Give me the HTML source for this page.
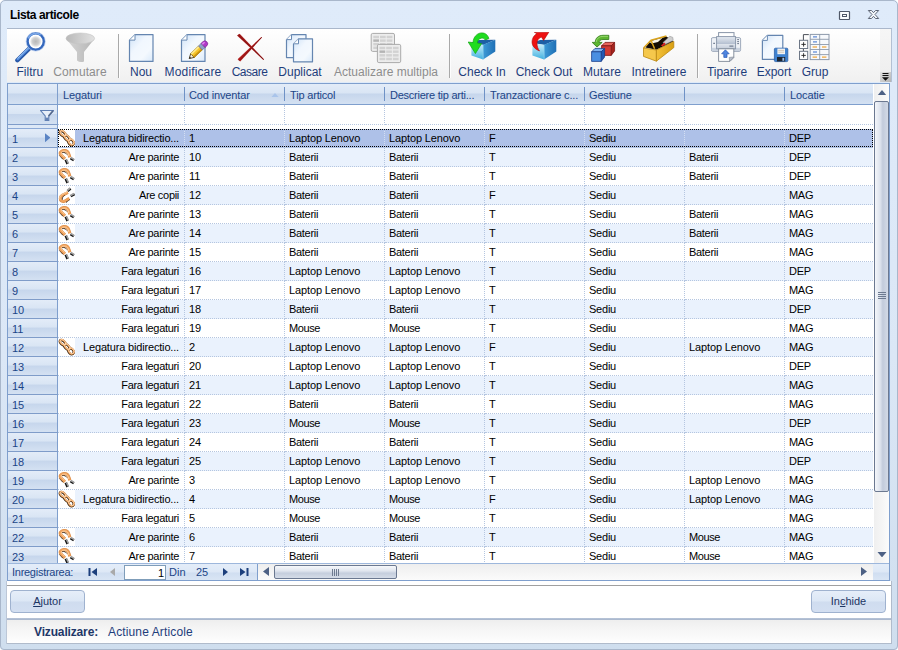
<!DOCTYPE html>
<html><head><meta charset="utf-8"><title>Lista articole</title>
<style>
*{box-sizing:border-box;margin:0;padding:0}
html,body{width:898px;height:650px;overflow:hidden;background:#fff}
body{font-family:"Liberation Sans",sans-serif;font-size:11px;color:#000;position:relative}
.abs{position:absolute}
#win{position:absolute;left:0;top:0;width:898px;height:650px;background:linear-gradient(#dfebfa 0,#dbe7f6 55%,#cfdeee 100%);border-radius:5px 5px 4px 4px;}
#win:before{content:"";position:absolute;left:0;top:0;right:0;bottom:0;border:1px solid #a9b7cb;border-radius:5px 5px 4px 4px}
#title{position:absolute;left:10px;top:8px;font-weight:bold;font-size:12px;letter-spacing:-0.38px;color:#000;white-space:nowrap}
#tb{position:absolute;left:7px;top:28px;width:885px;height:54px;background:linear-gradient(#ffffff,#f8f8f8 50%,#f0f0f0);border-top:1px solid #aab7cb;border-right:1px solid #b3c0d3}
.tbtn{position:absolute;top:0;height:54px;text-align:center;font-size:12px;color:#1e3d7b;white-space:nowrap}
.tbtn .lbl{position:absolute;left:50%;transform:translateX(-50%);top:36px;line-height:14px}
.tbtn.dis .lbl{color:#8d8d8d}
.tbtn svg{position:absolute;left:24px;top:3px}
.sep{position:absolute;top:5px;width:1px;height:44px;background:#a9a9a9;box-shadow:1px 0 0 #fdfdfd}
#grid{position:absolute;left:7px;top:83px;width:883px;height:498px;background:#fff;border:1px solid #7f9fcd}
.hdr{position:absolute;top:0;height:20px;background:linear-gradient(#e3ecf8 0,#d9e5f4 45%,#c6d6ec 50%,#d4e1f2 100%);color:#1c4587;font-size:11px;line-height:20px;white-space:nowrap;overflow:hidden}
.hsep{position:absolute;top:3px;width:1px;height:14px;background:#6f92c6}
.ind{position:absolute;left:0;width:50px;background:linear-gradient(#e3ecf8 0,#d9e5f4 45%,#c6d6ec 50%,#d4e1f2 100%);border-right:1px solid #7f9fcd;border-bottom:1px solid #7f9cc9;color:#1c4587;font-size:11px}
.row{position:absolute;left:50px;width:815px;height:19px}
.cell{position:absolute;top:0;height:19px;line-height:18px;white-space:nowrap;overflow:hidden;font-size:11px;border-right:1px dotted #b5c6e0;border-bottom:1px dotted #b5c6e0}
.ic{position:absolute;left:0;top:0}
</style></head><body>
<div id="win">
<div id="title">Lista articole</div>

<svg class="abs" style="left:836px;top:8px" width="50" height="14" viewBox="0 0 50 14">
<rect x="3.5" y="3.5" width="10" height="8" rx="0.5" fill="#fafcfe" stroke="#4f5868" stroke-width="1.2"/><rect x="6.5" y="6.5" width="4" height="2" fill="#fff" stroke="#4f5868"/>
<path d="M32.3 2.5h3.2l2 2.2 2-2.2h3.2l-3.7 4 3.7 4h-3.2l-2-2.2-2 2.2h-3.2l3.7-4z" fill="#f6f9fd" stroke="#5d6676" stroke-width="1" stroke-linejoin="round"/>
</svg>
<div id="tb">
<div class="tbtn" style="left:-16px;width:80px"><svg width="32" height="32" viewBox="0 0 32 32"><defs>
<linearGradient id="gpage" x1="0" y1="0" x2="1" y2="1"><stop offset="0" stop-color="#cde1f7"/><stop offset="0.4" stop-color="#f1f7fe"/><stop offset="0.7" stop-color="#f4f9fe"/><stop offset="1" stop-color="#d9e9fa"/></linearGradient>
<radialGradient id="glens" cx="0.5" cy="0.5" r="0.5"><stop offset="0" stop-color="#b8b8b8"/><stop offset="0.6" stop-color="#cdcdcd"/><stop offset="1" stop-color="#f4f4f4"/></radialGradient>
<linearGradient id="gfun" x1="0" y1="0" x2="1" y2="0"><stop offset="0" stop-color="#b9b9b9"/><stop offset="1" stop-color="#e2e2e2"/></linearGradient>
<linearGradient id="gfun2" x1="0" y1="0" x2="1" y2="0"><stop offset="0" stop-color="#d6d6d6"/><stop offset="1" stop-color="#b5b5b5"/></linearGradient>
<linearGradient id="gboxl" x1="0" y1="0" x2="0" y2="1"><stop offset="0" stop-color="#d4f2fb"/><stop offset="1" stop-color="#3fb0e0"/></linearGradient>
<linearGradient id="gboxr" x1="0" y1="0" x2="1" y2="0"><stop offset="0" stop-color="#3d9ad6"/><stop offset="1" stop-color="#1f6fb5"/></linearGradient>
<linearGradient id="gprn" x1="0" y1="0" x2="0" y2="1"><stop offset="0" stop-color="#e6ebf2"/><stop offset="0.6" stop-color="#b4bfd0"/><stop offset="0.62" stop-color="#dfe4ec"/><stop offset="1" stop-color="#c3ccda"/></linearGradient>
<linearGradient id="gyl" x1="0" y1="0" x2="1" y2="0"><stop offset="0" stop-color="#f3c23c"/><stop offset="1" stop-color="#d99f12"/></linearGradient>
</defs>
<path d="M15.6 15.3 L2.4 28.2" stroke="#2858a8" stroke-width="4.4" stroke-linecap="round"/>
<path d="M15.2 14.9 L2.6 27.2" stroke="#5e97e4" stroke-width="2" stroke-linecap="round"/>
<path d="M14.6 14.7 L3 26" stroke="#a5c8f4" stroke-width="0.8" stroke-linecap="round"/>
<circle cx="20.7" cy="9.5" r="8.2" fill="#fff" stroke="#3568bd" stroke-width="2.6"/>
<circle cx="20.7" cy="9.5" r="5.6" fill="url(#glens)"/>
<path d="M13.2 6.4 A8.2 8.2 0 0 1 25.6 3" fill="none" stroke="#79a6e6" stroke-width="1.6"/>
<circle cx="20.7" cy="9.5" r="9.6" fill="none" stroke="#aec8ee" stroke-width="0.6"/>
</svg><span class="lbl" style="letter-spacing:0px;margin-left:-1.2px">Filtru</span></div>
<div class="tbtn dis" style="left:33px;width:80px"><svg width="32" height="32" viewBox="0 0 32 32">
<path d="M2.2 7 L13 20 L13 28.5 Q16 31 20 29.5 L20 20 L30.3 7 Z" fill="url(#gfun2)"/>
<ellipse cx="16.3" cy="6.4" rx="14.3" ry="5.4" fill="url(#gfun)" stroke="#c4c4c4" stroke-width="0.6"/>
</svg><span class="lbl" style="letter-spacing:0.1px;margin-left:0px">Comutare</span></div>
<div class="tbtn" style="left:94px;width:80px"><svg width="32" height="32" viewBox="0 0 32 32"><path d="M10.0 2.6H28.0V29.400000000000002H4.5V8.1Z" fill="url(#gpage)" stroke="#6485b0" stroke-width="1.2" stroke-linejoin="round"/><path d="M4.5 8.1H10.0V2.6Z" fill="#fff"/><path d="M4.5 8.1H10.0V2.6" fill="none" stroke="#6a8ab3" stroke-width="1" stroke-linejoin="round"/><path d="M4.5 8.1L10.0 2.6" stroke="#a9bdd6" stroke-width="0.7"/></svg><span class="lbl" style="letter-spacing:0px;margin-left:0px">Nou</span></div>
<div class="tbtn" style="left:146px;width:80px"><svg width="32" height="32" viewBox="0 0 32 32"><path d="M10.0 2.6H28.0V29.400000000000002H4.5V8.1Z" fill="url(#gpage)" stroke="#6485b0" stroke-width="1.2" stroke-linejoin="round"/><path d="M4.5 8.1H10.0V2.6Z" fill="#fff"/><path d="M4.5 8.1H10.0V2.6" fill="none" stroke="#6a8ab3" stroke-width="1" stroke-linejoin="round"/><path d="M4.5 8.1L10.0 2.6" stroke="#a9bdd6" stroke-width="0.7"/>
<g transform="translate(12.2 26.6) rotate(-43.5)">
<path d="M0 0 L4.5 -2.6 L4.5 2.6 Z" fill="#f8efd8" stroke="#3a2c10" stroke-width="0.8"/>
<path d="M0 0 L1.8 -1 L1.8 1 Z" fill="#222"/>
<rect x="4.5" y="-2.7" width="11" height="5.4" fill="#f6c52b" stroke="#7a5a0a" stroke-width="0.6"/>
<rect x="4.5" y="-2.7" width="11" height="1.8" fill="#fde88a"/>
<rect x="4.5" y="1.2" width="11" height="1.5" fill="#c99212"/>
<rect x="15.5" y="-2.8" width="3.6" height="5.6" fill="#8fa0c8" stroke="#4d5b80" stroke-width="0.5"/>
<path d="M19.1 -2.9 H21.5 A2.9 2.9 0 0 1 21.5 2.9 H19.1 Z" fill="#b038c8" stroke="#6a1880" stroke-width="0.5"/>
<path d="M19.4 -2 H21.6 A2 1.4 0 0 1 22.6 -0.6 H19.4Z" fill="#e487f2"/>
</g></svg><span class="lbl" style="letter-spacing:0.14px;margin-left:0px">Modificare</span></div>
<div class="tbtn" style="left:203px;width:80px"><svg width="32" height="32" viewBox="0 0 32 32">
<path d="M3 3.4 L5.6 1.8 L30 27.2 L29.3 27.9 Z" fill="#a81a1a"/>
<path d="M4.2 2.8 L29.6 27.5" stroke="#6b1010" stroke-width="0.7"/>
<path d="M3.6 27.2 L6.2 29.4 L28 5.6 L27.3 4.9 Z" fill="#b21c1c"/>
<path d="M5.2 28.6 L27.7 5.3" stroke="#701010" stroke-width="0.7"/>
</svg><span class="lbl" style="letter-spacing:-0.5px;margin-left:-0.5px">Casare</span></div>
<div class="tbtn" style="left:253px;width:80px"><svg width="32" height="32" viewBox="0 0 32 32"><path d="M7.5 2.6H22.0V25.6H2.5V7.6Z" fill="url(#gpage)" stroke="#6485b0" stroke-width="1.2" stroke-linejoin="round"/><path d="M2.5 7.6H7.5V2.6Z" fill="#fff"/><path d="M2.5 7.6H7.5V2.6" fill="none" stroke="#6a8ab3" stroke-width="1" stroke-linejoin="round"/><path d="M2.5 7.6L7.5 2.6" stroke="#a9bdd6" stroke-width="0.7"/><path d="M14.5 6.8H28.5V29.8H9.5V11.8Z" fill="url(#gpage)" stroke="#6485b0" stroke-width="1.2" stroke-linejoin="round"/><path d="M9.5 11.8H14.5V6.8Z" fill="#fff"/><path d="M9.5 11.8H14.5V6.8" fill="none" stroke="#6a8ab3" stroke-width="1" stroke-linejoin="round"/><path d="M9.5 11.8L14.5 6.8" stroke="#a9bdd6" stroke-width="0.7"/></svg><span class="lbl" style="letter-spacing:0px;margin-left:0px">Duplicat</span></div>
<div class="tbtn dis" style="left:339px;width:80px"><svg width="32" height="32" viewBox="0 0 32 32"><rect x="1.2" y="1.4" width="23.3" height="18" rx="1.5" fill="#ededed" stroke="#ababab" stroke-width="1"/><rect x="3.30" y="3.80" width="5.70" height="2.40" fill="#d2d2d2"/><rect x="10.00" y="3.80" width="5.70" height="2.40" fill="#d2d2d2"/><rect x="16.70" y="3.80" width="5.70" height="2.40" fill="#d2d2d2"/><rect x="3.30" y="7.40" width="5.70" height="2.40" fill="#b4b4b4"/><rect x="10.00" y="7.40" width="5.70" height="2.40" fill="#d2d2d2"/><rect x="16.70" y="7.40" width="5.70" height="2.40" fill="#d2d2d2"/><rect x="3.30" y="11.00" width="5.70" height="2.40" fill="#d2d2d2"/><rect x="10.00" y="11.00" width="5.70" height="2.40" fill="#d2d2d2"/><rect x="16.70" y="11.00" width="5.70" height="2.40" fill="#d2d2d2"/><rect x="3.30" y="14.60" width="5.70" height="2.40" fill="#d2d2d2"/><rect x="10.00" y="14.60" width="5.70" height="2.40" fill="#d2d2d2"/><rect x="16.70" y="14.60" width="5.70" height="2.40" fill="#d2d2d2"/><rect x="7.4" y="12.4" width="23.3" height="18.2" rx="1.5" fill="#ededed" stroke="#ababab" stroke-width="1"/><rect x="9.50" y="14.80" width="5.70" height="2.45" fill="#d2d2d2"/><rect x="16.20" y="14.80" width="5.70" height="2.45" fill="#d2d2d2"/><rect x="22.90" y="14.80" width="5.70" height="2.45" fill="#d2d2d2"/><rect x="9.50" y="18.45" width="5.70" height="2.45" fill="#b4b4b4"/><rect x="16.20" y="18.45" width="5.70" height="2.45" fill="#d2d2d2"/><rect x="22.90" y="18.45" width="5.70" height="2.45" fill="#d2d2d2"/><rect x="9.50" y="22.10" width="5.70" height="2.45" fill="#d2d2d2"/><rect x="16.20" y="22.10" width="5.70" height="2.45" fill="#d2d2d2"/><rect x="22.90" y="22.10" width="5.70" height="2.45" fill="#d2d2d2"/><rect x="9.50" y="25.75" width="5.70" height="2.45" fill="#d2d2d2"/><rect x="16.20" y="25.75" width="5.70" height="2.45" fill="#d2d2d2"/><rect x="22.90" y="25.75" width="5.70" height="2.45" fill="#d2d2d2"/></svg><span class="lbl" style="letter-spacing:0px;margin-left:0px">Actualizare multipla</span></div>
<div class="tbtn" style="left:435px;width:80px"><svg width="32" height="32" viewBox="0 0 32 32">
<path d="M5.4 11 L13 8 L29.2 7.7 L17.1 12.9 Z" fill="#1d5fa5"/>
<path d="M5.4 11 L17.1 12.8 L17.1 27.5 L5.4 23.4 Z" fill="url(#gboxl)"/>
<path d="M17.1 12.8 L29.3 7.7 L29.3 19.4 L17.1 27.5 Z" fill="url(#gboxr)"/>
<path d="M17.1 12.8 L17.1 27.5" stroke="#8fd4f0" stroke-width="0.6"/>

<path d="M22.9 6.6 C21.5 1.2 16 -0.6 11.5 2.2 C8.4 4.2 7.2 7.4 7 10.6 L2.2 10 L9.4 21.6 L15.6 11.6 L11.4 11.1 C11.6 8.6 12.6 6.8 15 6.2 C17 5.8 18.6 6.6 19.2 8 Z" fill="#1fdc1f" stroke="#10a510" stroke-width="0.7" stroke-linejoin="round"/>
</svg><span class="lbl" style="letter-spacing:0px;margin-left:0px">Check In</span></div>
<div class="tbtn" style="left:497px;width:80px"><svg width="32" height="32" viewBox="0 0 32 32">
<path d="M4.4 11 L12 8 L28.2 7.7 L16.1 12.9 Z" fill="#1d5fa5"/>
<path d="M4.4 11 L16.1 12.8 L16.1 27.5 L4.4 23.4 Z" fill="url(#gboxl)"/>
<path d="M16.1 12.8 L28.3 7.7 L28.3 19.4 L16.1 27.5 Z" fill="url(#gboxr)"/>
<path d="M16.1 12.8 L16.1 27.5" stroke="#8fd4f0" stroke-width="0.6"/>

<path d="M11.6 19 C5.6 16.6 3 12.2 4.4 7.4 C5.2 4.6 7 2.6 9 1.6 L6.4 0.4 L20.8 0.2 L15.6 8.4 L13.4 5 C10.6 6.2 9 8.4 9 11.2 C9 14.4 10 17 11.6 19 Z" fill="#ee1212" stroke="#b00a0a" stroke-width="0.6" stroke-linejoin="round"/>
</svg><span class="lbl" style="letter-spacing:0px;margin-left:0px">Check Out</span></div>
<div class="tbtn" style="left:555px;width:80px"><svg width="32" height="32" viewBox="0 0 32 32"><path d="M15.6 13.8 L19.0 10.4 L28.599999999999998 10.4 L25.2 13.8 Z" fill="#e8665c" stroke="#7c1411" stroke-width="0.8" stroke-linejoin="round"/><path d="M25.2 13.8 L28.599999999999998 10.4 L28.599999999999998 19.0 L25.2 23.4 Z" fill="#a5231d" stroke="#7c1411" stroke-width="0.8" stroke-linejoin="round"/><rect x="15.6" y="13.8" width="9.6" height="9.6" fill="#d23b33" stroke="#7c1411" stroke-width="0.8" stroke-linejoin="round"/><path d="M5.6 19.8 L9.0 16.400000000000002 L18.599999999999998 16.400000000000002 L15.2 19.8 Z" fill="#7db2f0" stroke="#1a3f8a" stroke-width="0.8" stroke-linejoin="round"/><path d="M15.2 19.8 L18.599999999999998 16.400000000000002 L18.599999999999998 25.0 L15.2 29.4 Z" fill="#2359b3" stroke="#1a3f8a" stroke-width="0.8" stroke-linejoin="round"/><rect x="5.6" y="19.8" width="9.6" height="9.6" fill="#4a8fe2" stroke="#1a3f8a" stroke-width="0.8" stroke-linejoin="round"/><path d="M22.8 3.3 L22.8 7.5 L17 7.5 C14.6 7.6 13.2 8.6 13 10.4 L16.2 10.4 L11 15 L6.2 10.4 L9.2 10.4 C9.4 6 12.4 3.4 17 3.3 Z" fill="#5db531" stroke="#2e7a17" stroke-width="0.8" stroke-linejoin="round"/>
 <path d="M22 4.3 L17 4.3 C13 4.5 10.6 6.6 10.2 10" stroke="#a4e07c" stroke-width="0.8" fill="none"/></svg><span class="lbl" style="letter-spacing:0.15px;margin-left:0px">Mutare</span></div>
<div class="tbtn" style="left:612px;width:80px"><svg width="32" height="32" viewBox="0 0 32 32">
<path d="M2.4 15.6 L8 8.6 L23.4 4.4 L30.4 9.6 L13.4 17.8 Z" fill="#140c04"/>
<path d="M20 10.5 L26.8 4.2 L29.8 5.4 L30.2 8.4 L22 12.6 Z" fill="#cfcfcf" stroke="#8a8a8a" stroke-width="0.5"/>
<path d="M18 13.4 L21.6 10.6 L22.6 12 L19.4 14.4Z" fill="#e02020"/>
<path d="M6 9.6 L14 7.2 L19.6 5.8 L15 10 L8.4 11.4 Z" fill="#f8f4ea"/>
<path d="M0.6 16 L8 8.2 L23.4 4 M8 8.2 L11.6 16.8" stroke="#d9a21c" stroke-width="1.5" fill="none" stroke-linejoin="round"/>
<path d="M0.5 16 L13.4 18 L13.4 29.2 L0.5 24.4 Z" fill="#f5c84c" stroke="#b98712" stroke-width="0.8" stroke-linejoin="round"/>
<path d="M13.4 18 L30.8 9.4 L30.8 15.6 L13.4 29.2 Z" fill="url(#gyl)" stroke="#b98712" stroke-width="0.8" stroke-linejoin="round"/>
</svg><span class="lbl" style="letter-spacing:0.1px;margin-left:0px">Intretinere</span></div>
<div class="tbtn" style="left:680px;width:80px"><svg width="32" height="32" viewBox="0 0 32 32">
<rect x="7.6" y="0.6" width="15.4" height="5" fill="#fff" stroke="#8996a8" stroke-width="1"/>
<rect x="0.4" y="5.6" width="29.2" height="13.8" rx="1.5" fill="#eef1f6" stroke="#95a1b4" stroke-width="0.9"/>
<rect x="0.8" y="15.8" width="28.4" height="3.2" fill="#c9d2df"/>
<rect x="5.6" y="4.6" width="19" height="12.2" fill="url(#gprn)" stroke="#8794a8" stroke-width="0.9"/>
<rect x="18.4" y="13.6" width="4" height="1" fill="#5e6b80"/>
<rect x="2.2" y="10.8" width="1.8" height="1" fill="#5e6b80"/>
<rect x="26.2" y="7.2" width="1.8" height="0.9" fill="#5e6b80"/><rect x="26.2" y="9.2" width="1.8" height="0.9" fill="#5e6b80"/><rect x="26.2" y="11.2" width="1.8" height="0.9" fill="#5e6b80"/>
<path d="M7.6 16.8 H22.8 V25.6 L19 29.4 H7.6 Z" fill="#fff" stroke="#7d8796" stroke-width="0.9" stroke-linejoin="round"/>
<path d="M22.8 25 L18.6 29.4 L18.2 25.4 Z" fill="#b9c0cb" stroke="#7d8796" stroke-width="0.6"/>
<path d="M14.4 17.8 L18.2 21.8 L16 21.8 L16 25.4 L12.8 25.4 L12.8 21.8 L10.6 21.8 Z" fill="#4f86e0" stroke="#2a57b4" stroke-width="0.7" stroke-linejoin="round"/>
</svg><span class="lbl" style="letter-spacing:0px;margin-left:0px">Tiparire</span></div>
<div class="tbtn" style="left:727px;width:80px"><svg width="32" height="32" viewBox="0 0 32 32"><path d="M9.4 3.4H24.799999999999997V27.4H4.4V8.4Z" fill="url(#gpage)" stroke="#6485b0" stroke-width="1.2" stroke-linejoin="round"/><path d="M4.4 8.4H9.4V3.4Z" fill="#fff"/><path d="M4.4 8.4H9.4V3.4" fill="none" stroke="#6a8ab3" stroke-width="1" stroke-linejoin="round"/><path d="M4.4 8.4L9.4 3.4" stroke="#a9bdd6" stroke-width="0.7"/>
<rect x="16.4" y="16.2" width="13.4" height="13.4" rx="1" fill="#3f82cf" stroke="#2b5ea6" stroke-width="0.8"/>
<rect x="19.4" y="16.6" width="7.6" height="5.6" fill="#f4f4f4"/>
<path d="M20.2 18.4h6M20.2 20.2h6" stroke="#c9b9a0" stroke-width="0.7"/>
<rect x="19" y="25" width="8.2" height="4.4" fill="#1e2630"/>
<rect x="24.4" y="25.8" width="1.8" height="3" fill="#9fc0e8"/>
</svg><span class="lbl" style="letter-spacing:0px;margin-left:0px">Export</span></div>
<div class="tbtn" style="left:768px;width:80px"><svg width="32" height="32" viewBox="0 0 32 32"><rect x="11.2" y="2.4" width="18.8" height="25.2" fill="#f7f9fc" stroke="#8c98aa" stroke-width="1"/><path d="M20.7 2.4V27.6 M11.2 7.3H30 M11.2 12.5H30 M11.2 17.5H30 M11.2 22.6H30" stroke="#8c98aa" stroke-width="0.9"/><path d="M14 4.9H18" stroke="#4a7ad0" stroke-width="1.1"/><path d="M14 9.9H18" stroke="#4a7ad0" stroke-width="1.1"/><path d="M13.6 15H18" stroke="#f0a232" stroke-width="1.2"/><path d="M23 15H27.4" stroke="#f0a232" stroke-width="1.2"/><path d="M14 20H18" stroke="#4a7ad0" stroke-width="1.1"/><path d="M13.6 25.1H18" stroke="#f0a232" stroke-width="1.2"/><path d="M23 25.1H27.4" stroke="#f0a232" stroke-width="1.2"/><path d="M9.8 2.6H4.4V8.2 M4.4 16.5V19.2" stroke="#4a4f58" stroke-width="1" fill="none"/><rect x="0.5" y="8.3" width="8.2" height="8.2" fill="#fdfdfd" stroke="#6d7786" stroke-width="1"/><path d="M2.4 12.4H6.8M4.6 10.200000000000001V14.600000000000001" stroke="#222" stroke-width="0.9"/><rect x="0.5" y="19.3" width="8.2" height="8.2" fill="#fdfdfd" stroke="#6d7786" stroke-width="1"/><path d="M2.4 23.4H6.8M4.6 21.2V25.6" stroke="#222" stroke-width="0.9"/></svg><span class="lbl" style="letter-spacing:0px;margin-left:0px">Grup</span></div>
<div class="sep" style="left:111px"></div>
<div class="sep" style="left:442px"></div>
<div class="sep" style="left:690px"></div>
<div class="abs" style="left:873px;top:0;width:11px;height:53px;background:linear-gradient(#f6f6f6,#ededed)"></div>
<svg class="abs" style="left:873px;top:43px" width="11" height="10" viewBox="0 0 11 10"><defs><linearGradient id="gchev" x1="0" y1="0" x2="1" y2="1"><stop offset="0" stop-color="#e4e4e4"/><stop offset="1" stop-color="#b4b4b4"/></linearGradient></defs><rect x="0" y="0" width="11" height="10" fill="url(#gchev)"/><path d="M2.5 1.5h6M2.5 3.5h6" stroke="#111" stroke-width="1"/><path d="M2 5.2h7l-3.5 3.6z" fill="#111"/></svg>
</div>
<div id="grid">
<div class="hdr" style="left:0;width:865px;border-bottom:1px solid #7f9fcd;height:21px"></div>
<div class="abs" style="left:49px;top:0;width:1px;height:21px;background:#7f9fcd"></div>
<div class="abs" style="left:55px;top:0;height:20px;line-height:22px;color:#1c4587;font-size:11px;white-space:nowrap;letter-spacing:-0.1px">Legaturi</div>
<div class="abs" style="left:181px;top:0;height:20px;line-height:22px;color:#1c4587;font-size:11px;white-space:nowrap;letter-spacing:-0.14px">Cod inventar</div>
<div class="hsep" style="left:176px"></div>
<div class="abs" style="left:282px;top:0;height:20px;line-height:22px;color:#1c4587;font-size:11px;white-space:nowrap;letter-spacing:-0.18px">Tip articol</div>
<div class="hsep" style="left:276px"></div>
<div class="abs" style="left:382px;top:0;height:20px;line-height:22px;color:#1c4587;font-size:11px;white-space:nowrap;letter-spacing:-0.24px">Descriere tip arti...</div>
<div class="hsep" style="left:376px"></div>
<div class="abs" style="left:482px;top:0;height:20px;line-height:22px;color:#1c4587;font-size:11px;white-space:nowrap;letter-spacing:-0.13px">Tranzactionare c...</div>
<div class="hsep" style="left:476px"></div>
<div class="abs" style="left:581px;top:0;height:20px;line-height:22px;color:#1c4587;font-size:11px;white-space:nowrap;letter-spacing:-0.18px">Gestiune</div>
<div class="hsep" style="left:576px"></div>
<div class="abs" style="left:682px;top:0;height:20px;line-height:22px;color:#1c4587;font-size:11px;white-space:nowrap"></div>
<div class="hsep" style="left:676px"></div>
<div class="abs" style="left:782px;top:0;height:20px;line-height:22px;color:#1c4587;font-size:11px;white-space:nowrap;letter-spacing:-0.11px">Locatie</div>
<div class="hsep" style="left:776px"></div>
<svg class="abs" style="left:262.5px;top:9px" width="8" height="4.4" viewBox="0 0 9 5"><path d="M0 5L4.5 0L9 5z" fill="#a9c4ea"/></svg>
<div class="ind" style="top:21px;height:20px"></div>
<svg class="abs" style="left:32px;top:25px" width="14" height="12" viewBox="0 0 14 12"><path d="M0.6 1.5h12.8L8.8 7V11.4h-3.6V7z" fill="#e8eff9" stroke="#5f7fb4" stroke-width="1.1" stroke-linejoin="miter"/><path d="M13 1.8L8.6 7" stroke="#56698c" stroke-width="1.6"/><path d="M5.4 8.6h3.2v2.8h-3.2z" fill="#6482b4"/></svg>
<div class="cell" style="left:50px;top:21px;width:127px;height:20px;background:#fff"></div>
<div class="cell" style="left:177px;top:21px;width:100px;height:20px;background:#fff"></div>
<div class="cell" style="left:277px;top:21px;width:100px;height:20px;background:#fff"></div>
<div class="cell" style="left:377px;top:21px;width:100px;height:20px;background:#fff"></div>
<div class="cell" style="left:477px;top:21px;width:100px;height:20px;background:#fff"></div>
<div class="cell" style="left:577px;top:21px;width:100px;height:20px;background:#fff"></div>
<div class="cell" style="left:677px;top:21px;width:100px;height:20px;background:#fff"></div>
<div class="cell" style="left:777px;top:21px;width:88px;height:20px;background:#fff;border-right:none"></div>
<div class="abs" style="left:0;top:41px;width:50px;height:4px;background:#dde8f6;border-right:1px solid #7f9fcd;border-bottom:1px solid #8ca9d6"></div>
<div class="ind" style="top:45px;height:19px;line-height:19px"><span class="abs" style="left:4px;top:0.5px">1</span><svg class="abs" style="left:37px;top:3.5px" width="5.4" height="9.4" viewBox="0 0 6 10"><path d="M0 0L6 5L0 10z" fill="#5a84c4"/></svg></div>
<div class="row" style="top:45px">
<div class="cell" style="left:0px;width:127px;background:#aec1e8;border-right-color:#d3def2"><svg class="ic" width="17" height="18" viewBox="0 0 17 18"><rect width="17" height="18" fill="#fff"/>
<g fill="none" stroke="#2e1a06" stroke-width="2.3"><ellipse cx="4.6" cy="4.7" rx="3.3" ry="1.9" transform="rotate(40 4.6 4.7)"/><ellipse cx="8.9" cy="9" rx="3.4" ry="1.8" transform="rotate(47 8.9 9)"/><ellipse cx="13" cy="13.3" rx="3.1" ry="2.3" transform="rotate(52 13 13.3)"/></g>
<g fill="none" stroke="#f3a55e" stroke-width="1.7"><ellipse cx="4.9" cy="4.4" rx="3.3" ry="1.9" transform="rotate(40 4.9 4.4)"/><ellipse cx="9.2" cy="8.7" rx="3.4" ry="1.8" transform="rotate(47 9.2 8.7)"/><ellipse cx="13.3" cy="13" rx="3.1" ry="2.3" transform="rotate(52 13.3 13)"/></g>
<g fill="none" stroke="#fcd9b4" stroke-width="0.7"><ellipse cx="5" cy="4.2" rx="3.3" ry="1.9" transform="rotate(40 5 4.2)"/><ellipse cx="9.3" cy="8.5" rx="3.4" ry="1.8" transform="rotate(47 9.3 8.5)"/><ellipse cx="13.4" cy="12.8" rx="3.1" ry="2.3" transform="rotate(52 13.4 12.8)"/></g></svg><span class="abs" style="right:5px;top:0;letter-spacing:-0.17px">Legatura bidirectio...</span></div>
<div class="cell" style="left:127px;width:100px;background:#aec1e8;border-right-color:#d3def2"><span class="abs" style="left:4px;top:0">1</span></div>
<div class="cell" style="left:227px;width:100px;background:#aec1e8;border-right-color:#d3def2"><span class="abs" style="left:4px;top:0;letter-spacing:-0.12px">Laptop Lenovo</span></div>
<div class="cell" style="left:327px;width:100px;background:#aec1e8;border-right-color:#d3def2"><span class="abs" style="left:4px;top:0;letter-spacing:-0.12px">Laptop Lenovo</span></div>
<div class="cell" style="left:427px;width:100px;background:#aec1e8;border-right-color:#d3def2"><span class="abs" style="left:4px;top:0">F</span></div>
<div class="cell" style="left:527px;width:100px;background:#aec1e8;border-right-color:#d3def2"><span class="abs" style="left:4px;top:0;letter-spacing:-0.23px">Sediu</span></div>
<div class="cell" style="left:627px;width:100px;background:#aec1e8;border-right-color:#d3def2"><span class="abs" style="left:4px;top:0"></span></div>
<div class="cell" style="left:727px;width:88px;background:#aec1e8;border-right:none"><span class="abs" style="left:4px;top:0;letter-spacing:-0.24px">DEP</span></div>
<div class="abs" style="left:0;top:0;width:815px;height:18px;border:1px dotted #000"></div>
</div>
<div class="ind" style="top:64px;height:19px;line-height:19px"><span class="abs" style="left:4px;top:0.5px">2</span></div>
<div class="row" style="top:64px">
<div class="cell" style="left:0px;width:127px;background:#eaf2fd"><svg class="ic" width="17" height="18" viewBox="0 0 17 18"><rect width="17" height="18" fill="#fff"/>
<path d="M7.7 11.8 L9.6 15.9" stroke="#161616" stroke-width="2.6" fill="none"/><path d="M8.5 11.5 L10.4 15.5" stroke="#a2a2a2" stroke-width="1.6" fill="none"/>
<path d="M12.5 10.2 L15.8 12.3" stroke="#161616" stroke-width="2.4" fill="none"/><path d="M12.9 9.5 L16.3 11.6" stroke="#a2a2a2" stroke-width="1.6" fill="none"/>
<path d="M6.8 10.8 L2.9 6.9 C1.3 4.9 2.9 2.8 5.9 2.6 C8.5 2.5 10 3.8 10.6 5.6 L11.9 9.2" stroke="#d98a45" stroke-width="3.1" fill="none"/>
<path d="M6.9 10.6 L3.1 6.8 C1.6 4.9 3.1 3 5.9 2.8 C8.4 2.7 9.9 3.9 10.5 5.6 L11.8 9" stroke="#f0a25c" stroke-width="2.4" fill="none"/>
<path d="M6.6 9.4 L3.6 6.3 C2.6 4.9 3.5 3.3 5.9 3.1 C8.1 3 9.5 4.1 10.1 5.6 L10.9 8" stroke="#fbcfa2" stroke-width="1" fill="none"/>
<path d="M1.5 7.6 L5.2 11.6" stroke="#1a0d02" stroke-width="0.9" stroke-dasharray="1.2 0.5" fill="none"/>
<path d="M4.3 4.7 C6 4 8 4.9 8.9 6.8" stroke="#1a0d02" stroke-width="0.9" stroke-dasharray="1.4 0.4" fill="none"/></svg><span class="abs" style="right:5px;top:0;letter-spacing:-0.31px">Are parinte</span></div>
<div class="cell" style="left:127px;width:100px;background:#eaf2fd"><span class="abs" style="left:4px;top:0">10</span></div>
<div class="cell" style="left:227px;width:100px;background:#eaf2fd"><span class="abs" style="left:4px;top:0;letter-spacing:-0.31px">Baterii</span></div>
<div class="cell" style="left:327px;width:100px;background:#eaf2fd"><span class="abs" style="left:4px;top:0;letter-spacing:-0.31px">Baterii</span></div>
<div class="cell" style="left:427px;width:100px;background:#eaf2fd"><span class="abs" style="left:4px;top:0">T</span></div>
<div class="cell" style="left:527px;width:100px;background:#eaf2fd"><span class="abs" style="left:4px;top:0;letter-spacing:-0.23px">Sediu</span></div>
<div class="cell" style="left:627px;width:100px;background:#eaf2fd"><span class="abs" style="left:4px;top:0;letter-spacing:-0.31px">Baterii</span></div>
<div class="cell" style="left:727px;width:88px;background:#eaf2fd;border-right:none"><span class="abs" style="left:4px;top:0;letter-spacing:-0.24px">DEP</span></div>
</div>
<div class="ind" style="top:83px;height:19px;line-height:19px"><span class="abs" style="left:4px;top:0.5px">3</span></div>
<div class="row" style="top:83px">
<div class="cell" style="left:0px;width:127px;background:#fff"><svg class="ic" width="17" height="18" viewBox="0 0 17 18"><rect width="17" height="18" fill="#fff"/>
<path d="M7.7 11.8 L9.6 15.9" stroke="#161616" stroke-width="2.6" fill="none"/><path d="M8.5 11.5 L10.4 15.5" stroke="#a2a2a2" stroke-width="1.6" fill="none"/>
<path d="M12.5 10.2 L15.8 12.3" stroke="#161616" stroke-width="2.4" fill="none"/><path d="M12.9 9.5 L16.3 11.6" stroke="#a2a2a2" stroke-width="1.6" fill="none"/>
<path d="M6.8 10.8 L2.9 6.9 C1.3 4.9 2.9 2.8 5.9 2.6 C8.5 2.5 10 3.8 10.6 5.6 L11.9 9.2" stroke="#d98a45" stroke-width="3.1" fill="none"/>
<path d="M6.9 10.6 L3.1 6.8 C1.6 4.9 3.1 3 5.9 2.8 C8.4 2.7 9.9 3.9 10.5 5.6 L11.8 9" stroke="#f0a25c" stroke-width="2.4" fill="none"/>
<path d="M6.6 9.4 L3.6 6.3 C2.6 4.9 3.5 3.3 5.9 3.1 C8.1 3 9.5 4.1 10.1 5.6 L10.9 8" stroke="#fbcfa2" stroke-width="1" fill="none"/>
<path d="M1.5 7.6 L5.2 11.6" stroke="#1a0d02" stroke-width="0.9" stroke-dasharray="1.2 0.5" fill="none"/>
<path d="M4.3 4.7 C6 4 8 4.9 8.9 6.8" stroke="#1a0d02" stroke-width="0.9" stroke-dasharray="1.4 0.4" fill="none"/></svg><span class="abs" style="right:5px;top:0;letter-spacing:-0.31px">Are parinte</span></div>
<div class="cell" style="left:127px;width:100px;background:#fff"><span class="abs" style="left:4px;top:0">11</span></div>
<div class="cell" style="left:227px;width:100px;background:#fff"><span class="abs" style="left:4px;top:0;letter-spacing:-0.31px">Baterii</span></div>
<div class="cell" style="left:327px;width:100px;background:#fff"><span class="abs" style="left:4px;top:0;letter-spacing:-0.31px">Baterii</span></div>
<div class="cell" style="left:427px;width:100px;background:#fff"><span class="abs" style="left:4px;top:0">T</span></div>
<div class="cell" style="left:527px;width:100px;background:#fff"><span class="abs" style="left:4px;top:0;letter-spacing:-0.23px">Sediu</span></div>
<div class="cell" style="left:627px;width:100px;background:#fff"><span class="abs" style="left:4px;top:0;letter-spacing:-0.31px">Baterii</span></div>
<div class="cell" style="left:727px;width:88px;background:#fff;border-right:none"><span class="abs" style="left:4px;top:0;letter-spacing:-0.24px">DEP</span></div>
</div>
<div class="ind" style="top:102px;height:19px;line-height:19px"><span class="abs" style="left:4px;top:0.5px">4</span></div>
<div class="row" style="top:102px">
<div class="cell" style="left:0px;width:127px;background:#eaf2fd"><svg class="ic" width="17" height="18" viewBox="0 0 17 18"><rect width="17" height="18" fill="#fff"/>
<path d="M9.6 5.2 L12.6 2.6" stroke="#161616" stroke-width="2.4" fill="none"/><path d="M9.1 4.6 L12.1 2" stroke="#a2a2a2" stroke-width="1.7" fill="none"/>
<path d="M12.8 10.2 L16.5 8.1" stroke="#161616" stroke-width="2.4" fill="none"/><path d="M12.5 9.5 L16.2 7.4" stroke="#a2a2a2" stroke-width="1.7" fill="none"/>
<path d="M9.9 6.5 L4.2 9.4 C1.7 10.9 1.8 13.7 3.6 14.9 C5.2 15.9 6.6 15.3 7.6 14.7 L11.2 12.4" stroke="#d98a45" stroke-width="3" fill="none"/>
<path d="M9.8 6.5 L4.2 9.4 C1.9 10.9 2 13.6 3.7 14.7 C5.2 15.6 6.5 15.1 7.5 14.5 L11.1 12.3" stroke="#f0a25c" stroke-width="2.3" fill="none"/>
<path d="M9.2 5.9 L3.8 8.7 C1.6 10 1.3 12.2 2.2 13.6" stroke="#fbcfa2" stroke-width="0.9" fill="none"/>
<path d="M6.6 9.4 C4.6 10.6 4 12.2 4.5 13.9" stroke="#1a0d02" stroke-width="0.9" stroke-dasharray="1.4 0.4" fill="none"/>
<path d="M8 16.5 L12 13.4" stroke="#1a0d02" stroke-width="0.9" stroke-dasharray="1.2 0.5" fill="none"/></svg><span class="abs" style="right:5px;top:0;letter-spacing:-0.3px">Are copii</span></div>
<div class="cell" style="left:127px;width:100px;background:#eaf2fd"><span class="abs" style="left:4px;top:0">12</span></div>
<div class="cell" style="left:227px;width:100px;background:#eaf2fd"><span class="abs" style="left:4px;top:0;letter-spacing:-0.31px">Baterii</span></div>
<div class="cell" style="left:327px;width:100px;background:#eaf2fd"><span class="abs" style="left:4px;top:0;letter-spacing:-0.31px">Baterii</span></div>
<div class="cell" style="left:427px;width:100px;background:#eaf2fd"><span class="abs" style="left:4px;top:0">F</span></div>
<div class="cell" style="left:527px;width:100px;background:#eaf2fd"><span class="abs" style="left:4px;top:0;letter-spacing:-0.23px">Sediu</span></div>
<div class="cell" style="left:627px;width:100px;background:#eaf2fd"><span class="abs" style="left:4px;top:0"></span></div>
<div class="cell" style="left:727px;width:88px;background:#eaf2fd;border-right:none"><span class="abs" style="left:4px;top:0;letter-spacing:-0.3px">MAG</span></div>
</div>
<div class="ind" style="top:121px;height:19px;line-height:19px"><span class="abs" style="left:4px;top:0.5px">5</span></div>
<div class="row" style="top:121px">
<div class="cell" style="left:0px;width:127px;background:#fff"><svg class="ic" width="17" height="18" viewBox="0 0 17 18"><rect width="17" height="18" fill="#fff"/>
<path d="M7.7 11.8 L9.6 15.9" stroke="#161616" stroke-width="2.6" fill="none"/><path d="M8.5 11.5 L10.4 15.5" stroke="#a2a2a2" stroke-width="1.6" fill="none"/>
<path d="M12.5 10.2 L15.8 12.3" stroke="#161616" stroke-width="2.4" fill="none"/><path d="M12.9 9.5 L16.3 11.6" stroke="#a2a2a2" stroke-width="1.6" fill="none"/>
<path d="M6.8 10.8 L2.9 6.9 C1.3 4.9 2.9 2.8 5.9 2.6 C8.5 2.5 10 3.8 10.6 5.6 L11.9 9.2" stroke="#d98a45" stroke-width="3.1" fill="none"/>
<path d="M6.9 10.6 L3.1 6.8 C1.6 4.9 3.1 3 5.9 2.8 C8.4 2.7 9.9 3.9 10.5 5.6 L11.8 9" stroke="#f0a25c" stroke-width="2.4" fill="none"/>
<path d="M6.6 9.4 L3.6 6.3 C2.6 4.9 3.5 3.3 5.9 3.1 C8.1 3 9.5 4.1 10.1 5.6 L10.9 8" stroke="#fbcfa2" stroke-width="1" fill="none"/>
<path d="M1.5 7.6 L5.2 11.6" stroke="#1a0d02" stroke-width="0.9" stroke-dasharray="1.2 0.5" fill="none"/>
<path d="M4.3 4.7 C6 4 8 4.9 8.9 6.8" stroke="#1a0d02" stroke-width="0.9" stroke-dasharray="1.4 0.4" fill="none"/></svg><span class="abs" style="right:5px;top:0;letter-spacing:-0.31px">Are parinte</span></div>
<div class="cell" style="left:127px;width:100px;background:#fff"><span class="abs" style="left:4px;top:0">13</span></div>
<div class="cell" style="left:227px;width:100px;background:#fff"><span class="abs" style="left:4px;top:0;letter-spacing:-0.31px">Baterii</span></div>
<div class="cell" style="left:327px;width:100px;background:#fff"><span class="abs" style="left:4px;top:0;letter-spacing:-0.31px">Baterii</span></div>
<div class="cell" style="left:427px;width:100px;background:#fff"><span class="abs" style="left:4px;top:0">T</span></div>
<div class="cell" style="left:527px;width:100px;background:#fff"><span class="abs" style="left:4px;top:0;letter-spacing:-0.23px">Sediu</span></div>
<div class="cell" style="left:627px;width:100px;background:#fff"><span class="abs" style="left:4px;top:0;letter-spacing:-0.31px">Baterii</span></div>
<div class="cell" style="left:727px;width:88px;background:#fff;border-right:none"><span class="abs" style="left:4px;top:0;letter-spacing:-0.3px">MAG</span></div>
</div>
<div class="ind" style="top:140px;height:19px;line-height:19px"><span class="abs" style="left:4px;top:0.5px">6</span></div>
<div class="row" style="top:140px">
<div class="cell" style="left:0px;width:127px;background:#eaf2fd"><svg class="ic" width="17" height="18" viewBox="0 0 17 18"><rect width="17" height="18" fill="#fff"/>
<path d="M7.7 11.8 L9.6 15.9" stroke="#161616" stroke-width="2.6" fill="none"/><path d="M8.5 11.5 L10.4 15.5" stroke="#a2a2a2" stroke-width="1.6" fill="none"/>
<path d="M12.5 10.2 L15.8 12.3" stroke="#161616" stroke-width="2.4" fill="none"/><path d="M12.9 9.5 L16.3 11.6" stroke="#a2a2a2" stroke-width="1.6" fill="none"/>
<path d="M6.8 10.8 L2.9 6.9 C1.3 4.9 2.9 2.8 5.9 2.6 C8.5 2.5 10 3.8 10.6 5.6 L11.9 9.2" stroke="#d98a45" stroke-width="3.1" fill="none"/>
<path d="M6.9 10.6 L3.1 6.8 C1.6 4.9 3.1 3 5.9 2.8 C8.4 2.7 9.9 3.9 10.5 5.6 L11.8 9" stroke="#f0a25c" stroke-width="2.4" fill="none"/>
<path d="M6.6 9.4 L3.6 6.3 C2.6 4.9 3.5 3.3 5.9 3.1 C8.1 3 9.5 4.1 10.1 5.6 L10.9 8" stroke="#fbcfa2" stroke-width="1" fill="none"/>
<path d="M1.5 7.6 L5.2 11.6" stroke="#1a0d02" stroke-width="0.9" stroke-dasharray="1.2 0.5" fill="none"/>
<path d="M4.3 4.7 C6 4 8 4.9 8.9 6.8" stroke="#1a0d02" stroke-width="0.9" stroke-dasharray="1.4 0.4" fill="none"/></svg><span class="abs" style="right:5px;top:0;letter-spacing:-0.31px">Are parinte</span></div>
<div class="cell" style="left:127px;width:100px;background:#eaf2fd"><span class="abs" style="left:4px;top:0">14</span></div>
<div class="cell" style="left:227px;width:100px;background:#eaf2fd"><span class="abs" style="left:4px;top:0;letter-spacing:-0.31px">Baterii</span></div>
<div class="cell" style="left:327px;width:100px;background:#eaf2fd"><span class="abs" style="left:4px;top:0;letter-spacing:-0.31px">Baterii</span></div>
<div class="cell" style="left:427px;width:100px;background:#eaf2fd"><span class="abs" style="left:4px;top:0">T</span></div>
<div class="cell" style="left:527px;width:100px;background:#eaf2fd"><span class="abs" style="left:4px;top:0;letter-spacing:-0.23px">Sediu</span></div>
<div class="cell" style="left:627px;width:100px;background:#eaf2fd"><span class="abs" style="left:4px;top:0;letter-spacing:-0.31px">Baterii</span></div>
<div class="cell" style="left:727px;width:88px;background:#eaf2fd;border-right:none"><span class="abs" style="left:4px;top:0;letter-spacing:-0.3px">MAG</span></div>
</div>
<div class="ind" style="top:159px;height:19px;line-height:19px"><span class="abs" style="left:4px;top:0.5px">7</span></div>
<div class="row" style="top:159px">
<div class="cell" style="left:0px;width:127px;background:#fff"><svg class="ic" width="17" height="18" viewBox="0 0 17 18"><rect width="17" height="18" fill="#fff"/>
<path d="M7.7 11.8 L9.6 15.9" stroke="#161616" stroke-width="2.6" fill="none"/><path d="M8.5 11.5 L10.4 15.5" stroke="#a2a2a2" stroke-width="1.6" fill="none"/>
<path d="M12.5 10.2 L15.8 12.3" stroke="#161616" stroke-width="2.4" fill="none"/><path d="M12.9 9.5 L16.3 11.6" stroke="#a2a2a2" stroke-width="1.6" fill="none"/>
<path d="M6.8 10.8 L2.9 6.9 C1.3 4.9 2.9 2.8 5.9 2.6 C8.5 2.5 10 3.8 10.6 5.6 L11.9 9.2" stroke="#d98a45" stroke-width="3.1" fill="none"/>
<path d="M6.9 10.6 L3.1 6.8 C1.6 4.9 3.1 3 5.9 2.8 C8.4 2.7 9.9 3.9 10.5 5.6 L11.8 9" stroke="#f0a25c" stroke-width="2.4" fill="none"/>
<path d="M6.6 9.4 L3.6 6.3 C2.6 4.9 3.5 3.3 5.9 3.1 C8.1 3 9.5 4.1 10.1 5.6 L10.9 8" stroke="#fbcfa2" stroke-width="1" fill="none"/>
<path d="M1.5 7.6 L5.2 11.6" stroke="#1a0d02" stroke-width="0.9" stroke-dasharray="1.2 0.5" fill="none"/>
<path d="M4.3 4.7 C6 4 8 4.9 8.9 6.8" stroke="#1a0d02" stroke-width="0.9" stroke-dasharray="1.4 0.4" fill="none"/></svg><span class="abs" style="right:5px;top:0;letter-spacing:-0.31px">Are parinte</span></div>
<div class="cell" style="left:127px;width:100px;background:#fff"><span class="abs" style="left:4px;top:0">15</span></div>
<div class="cell" style="left:227px;width:100px;background:#fff"><span class="abs" style="left:4px;top:0;letter-spacing:-0.31px">Baterii</span></div>
<div class="cell" style="left:327px;width:100px;background:#fff"><span class="abs" style="left:4px;top:0;letter-spacing:-0.31px">Baterii</span></div>
<div class="cell" style="left:427px;width:100px;background:#fff"><span class="abs" style="left:4px;top:0">T</span></div>
<div class="cell" style="left:527px;width:100px;background:#fff"><span class="abs" style="left:4px;top:0;letter-spacing:-0.23px">Sediu</span></div>
<div class="cell" style="left:627px;width:100px;background:#fff"><span class="abs" style="left:4px;top:0;letter-spacing:-0.31px">Baterii</span></div>
<div class="cell" style="left:727px;width:88px;background:#fff;border-right:none"><span class="abs" style="left:4px;top:0;letter-spacing:-0.3px">MAG</span></div>
</div>
<div class="ind" style="top:178px;height:19px;line-height:19px"><span class="abs" style="left:4px;top:0.5px">8</span></div>
<div class="row" style="top:178px">
<div class="cell" style="left:0px;width:127px;background:#eaf2fd"><span class="abs" style="right:5px;top:0;letter-spacing:-0.31px">Fara legaturi</span></div>
<div class="cell" style="left:127px;width:100px;background:#eaf2fd"><span class="abs" style="left:4px;top:0">16</span></div>
<div class="cell" style="left:227px;width:100px;background:#eaf2fd"><span class="abs" style="left:4px;top:0;letter-spacing:-0.12px">Laptop Lenovo</span></div>
<div class="cell" style="left:327px;width:100px;background:#eaf2fd"><span class="abs" style="left:4px;top:0;letter-spacing:-0.12px">Laptop Lenovo</span></div>
<div class="cell" style="left:427px;width:100px;background:#eaf2fd"><span class="abs" style="left:4px;top:0">T</span></div>
<div class="cell" style="left:527px;width:100px;background:#eaf2fd"><span class="abs" style="left:4px;top:0;letter-spacing:-0.23px">Sediu</span></div>
<div class="cell" style="left:627px;width:100px;background:#eaf2fd"><span class="abs" style="left:4px;top:0"></span></div>
<div class="cell" style="left:727px;width:88px;background:#eaf2fd;border-right:none"><span class="abs" style="left:4px;top:0;letter-spacing:-0.24px">DEP</span></div>
</div>
<div class="ind" style="top:197px;height:19px;line-height:19px"><span class="abs" style="left:4px;top:0.5px">9</span></div>
<div class="row" style="top:197px">
<div class="cell" style="left:0px;width:127px;background:#fff"><span class="abs" style="right:5px;top:0;letter-spacing:-0.31px">Fara legaturi</span></div>
<div class="cell" style="left:127px;width:100px;background:#fff"><span class="abs" style="left:4px;top:0">17</span></div>
<div class="cell" style="left:227px;width:100px;background:#fff"><span class="abs" style="left:4px;top:0;letter-spacing:-0.12px">Laptop Lenovo</span></div>
<div class="cell" style="left:327px;width:100px;background:#fff"><span class="abs" style="left:4px;top:0;letter-spacing:-0.12px">Laptop Lenovo</span></div>
<div class="cell" style="left:427px;width:100px;background:#fff"><span class="abs" style="left:4px;top:0">T</span></div>
<div class="cell" style="left:527px;width:100px;background:#fff"><span class="abs" style="left:4px;top:0;letter-spacing:-0.23px">Sediu</span></div>
<div class="cell" style="left:627px;width:100px;background:#fff"><span class="abs" style="left:4px;top:0"></span></div>
<div class="cell" style="left:727px;width:88px;background:#fff;border-right:none"><span class="abs" style="left:4px;top:0;letter-spacing:-0.3px">MAG</span></div>
</div>
<div class="ind" style="top:216px;height:19px;line-height:19px"><span class="abs" style="left:4px;top:0.5px">10</span></div>
<div class="row" style="top:216px">
<div class="cell" style="left:0px;width:127px;background:#eaf2fd"><span class="abs" style="right:5px;top:0;letter-spacing:-0.31px">Fara legaturi</span></div>
<div class="cell" style="left:127px;width:100px;background:#eaf2fd"><span class="abs" style="left:4px;top:0">18</span></div>
<div class="cell" style="left:227px;width:100px;background:#eaf2fd"><span class="abs" style="left:4px;top:0;letter-spacing:-0.31px">Baterii</span></div>
<div class="cell" style="left:327px;width:100px;background:#eaf2fd"><span class="abs" style="left:4px;top:0;letter-spacing:-0.31px">Baterii</span></div>
<div class="cell" style="left:427px;width:100px;background:#eaf2fd"><span class="abs" style="left:4px;top:0">T</span></div>
<div class="cell" style="left:527px;width:100px;background:#eaf2fd"><span class="abs" style="left:4px;top:0;letter-spacing:-0.23px">Sediu</span></div>
<div class="cell" style="left:627px;width:100px;background:#eaf2fd"><span class="abs" style="left:4px;top:0"></span></div>
<div class="cell" style="left:727px;width:88px;background:#eaf2fd;border-right:none"><span class="abs" style="left:4px;top:0;letter-spacing:-0.24px">DEP</span></div>
</div>
<div class="ind" style="top:235px;height:19px;line-height:19px"><span class="abs" style="left:4px;top:0.5px">11</span></div>
<div class="row" style="top:235px">
<div class="cell" style="left:0px;width:127px;background:#fff"><span class="abs" style="right:5px;top:0;letter-spacing:-0.31px">Fara legaturi</span></div>
<div class="cell" style="left:127px;width:100px;background:#fff"><span class="abs" style="left:4px;top:0">19</span></div>
<div class="cell" style="left:227px;width:100px;background:#fff"><span class="abs" style="left:4px;top:0;letter-spacing:-0.4px">Mouse</span></div>
<div class="cell" style="left:327px;width:100px;background:#fff"><span class="abs" style="left:4px;top:0;letter-spacing:-0.4px">Mouse</span></div>
<div class="cell" style="left:427px;width:100px;background:#fff"><span class="abs" style="left:4px;top:0">T</span></div>
<div class="cell" style="left:527px;width:100px;background:#fff"><span class="abs" style="left:4px;top:0;letter-spacing:-0.23px">Sediu</span></div>
<div class="cell" style="left:627px;width:100px;background:#fff"><span class="abs" style="left:4px;top:0"></span></div>
<div class="cell" style="left:727px;width:88px;background:#fff;border-right:none"><span class="abs" style="left:4px;top:0;letter-spacing:-0.3px">MAG</span></div>
</div>
<div class="ind" style="top:254px;height:19px;line-height:19px"><span class="abs" style="left:4px;top:0.5px">12</span></div>
<div class="row" style="top:254px">
<div class="cell" style="left:0px;width:127px;background:#eaf2fd"><svg class="ic" width="17" height="18" viewBox="0 0 17 18"><rect width="17" height="18" fill="#fff"/>
<g fill="none" stroke="#2e1a06" stroke-width="2.3"><ellipse cx="4.6" cy="4.7" rx="3.3" ry="1.9" transform="rotate(40 4.6 4.7)"/><ellipse cx="8.9" cy="9" rx="3.4" ry="1.8" transform="rotate(47 8.9 9)"/><ellipse cx="13" cy="13.3" rx="3.1" ry="2.3" transform="rotate(52 13 13.3)"/></g>
<g fill="none" stroke="#f3a55e" stroke-width="1.7"><ellipse cx="4.9" cy="4.4" rx="3.3" ry="1.9" transform="rotate(40 4.9 4.4)"/><ellipse cx="9.2" cy="8.7" rx="3.4" ry="1.8" transform="rotate(47 9.2 8.7)"/><ellipse cx="13.3" cy="13" rx="3.1" ry="2.3" transform="rotate(52 13.3 13)"/></g>
<g fill="none" stroke="#fcd9b4" stroke-width="0.7"><ellipse cx="5" cy="4.2" rx="3.3" ry="1.9" transform="rotate(40 5 4.2)"/><ellipse cx="9.3" cy="8.5" rx="3.4" ry="1.8" transform="rotate(47 9.3 8.5)"/><ellipse cx="13.4" cy="12.8" rx="3.1" ry="2.3" transform="rotate(52 13.4 12.8)"/></g></svg><span class="abs" style="right:5px;top:0;letter-spacing:-0.17px">Legatura bidirectio...</span></div>
<div class="cell" style="left:127px;width:100px;background:#eaf2fd"><span class="abs" style="left:4px;top:0">2</span></div>
<div class="cell" style="left:227px;width:100px;background:#eaf2fd"><span class="abs" style="left:4px;top:0;letter-spacing:-0.12px">Laptop Lenovo</span></div>
<div class="cell" style="left:327px;width:100px;background:#eaf2fd"><span class="abs" style="left:4px;top:0;letter-spacing:-0.12px">Laptop Lenovo</span></div>
<div class="cell" style="left:427px;width:100px;background:#eaf2fd"><span class="abs" style="left:4px;top:0">F</span></div>
<div class="cell" style="left:527px;width:100px;background:#eaf2fd"><span class="abs" style="left:4px;top:0;letter-spacing:-0.23px">Sediu</span></div>
<div class="cell" style="left:627px;width:100px;background:#eaf2fd"><span class="abs" style="left:4px;top:0;letter-spacing:-0.12px">Laptop Lenovo</span></div>
<div class="cell" style="left:727px;width:88px;background:#eaf2fd;border-right:none"><span class="abs" style="left:4px;top:0;letter-spacing:-0.3px">MAG</span></div>
</div>
<div class="ind" style="top:273px;height:19px;line-height:19px"><span class="abs" style="left:4px;top:0.5px">13</span></div>
<div class="row" style="top:273px">
<div class="cell" style="left:0px;width:127px;background:#fff"><span class="abs" style="right:5px;top:0;letter-spacing:-0.31px">Fara legaturi</span></div>
<div class="cell" style="left:127px;width:100px;background:#fff"><span class="abs" style="left:4px;top:0">20</span></div>
<div class="cell" style="left:227px;width:100px;background:#fff"><span class="abs" style="left:4px;top:0;letter-spacing:-0.12px">Laptop Lenovo</span></div>
<div class="cell" style="left:327px;width:100px;background:#fff"><span class="abs" style="left:4px;top:0;letter-spacing:-0.12px">Laptop Lenovo</span></div>
<div class="cell" style="left:427px;width:100px;background:#fff"><span class="abs" style="left:4px;top:0">T</span></div>
<div class="cell" style="left:527px;width:100px;background:#fff"><span class="abs" style="left:4px;top:0;letter-spacing:-0.23px">Sediu</span></div>
<div class="cell" style="left:627px;width:100px;background:#fff"><span class="abs" style="left:4px;top:0"></span></div>
<div class="cell" style="left:727px;width:88px;background:#fff;border-right:none"><span class="abs" style="left:4px;top:0;letter-spacing:-0.24px">DEP</span></div>
</div>
<div class="ind" style="top:292px;height:19px;line-height:19px"><span class="abs" style="left:4px;top:0.5px">14</span></div>
<div class="row" style="top:292px">
<div class="cell" style="left:0px;width:127px;background:#eaf2fd"><span class="abs" style="right:5px;top:0;letter-spacing:-0.31px">Fara legaturi</span></div>
<div class="cell" style="left:127px;width:100px;background:#eaf2fd"><span class="abs" style="left:4px;top:0">21</span></div>
<div class="cell" style="left:227px;width:100px;background:#eaf2fd"><span class="abs" style="left:4px;top:0;letter-spacing:-0.12px">Laptop Lenovo</span></div>
<div class="cell" style="left:327px;width:100px;background:#eaf2fd"><span class="abs" style="left:4px;top:0;letter-spacing:-0.12px">Laptop Lenovo</span></div>
<div class="cell" style="left:427px;width:100px;background:#eaf2fd"><span class="abs" style="left:4px;top:0">T</span></div>
<div class="cell" style="left:527px;width:100px;background:#eaf2fd"><span class="abs" style="left:4px;top:0;letter-spacing:-0.23px">Sediu</span></div>
<div class="cell" style="left:627px;width:100px;background:#eaf2fd"><span class="abs" style="left:4px;top:0"></span></div>
<div class="cell" style="left:727px;width:88px;background:#eaf2fd;border-right:none"><span class="abs" style="left:4px;top:0;letter-spacing:-0.3px">MAG</span></div>
</div>
<div class="ind" style="top:311px;height:19px;line-height:19px"><span class="abs" style="left:4px;top:0.5px">15</span></div>
<div class="row" style="top:311px">
<div class="cell" style="left:0px;width:127px;background:#fff"><span class="abs" style="right:5px;top:0;letter-spacing:-0.31px">Fara legaturi</span></div>
<div class="cell" style="left:127px;width:100px;background:#fff"><span class="abs" style="left:4px;top:0">22</span></div>
<div class="cell" style="left:227px;width:100px;background:#fff"><span class="abs" style="left:4px;top:0;letter-spacing:-0.31px">Baterii</span></div>
<div class="cell" style="left:327px;width:100px;background:#fff"><span class="abs" style="left:4px;top:0;letter-spacing:-0.31px">Baterii</span></div>
<div class="cell" style="left:427px;width:100px;background:#fff"><span class="abs" style="left:4px;top:0">T</span></div>
<div class="cell" style="left:527px;width:100px;background:#fff"><span class="abs" style="left:4px;top:0;letter-spacing:-0.23px">Sediu</span></div>
<div class="cell" style="left:627px;width:100px;background:#fff"><span class="abs" style="left:4px;top:0"></span></div>
<div class="cell" style="left:727px;width:88px;background:#fff;border-right:none"><span class="abs" style="left:4px;top:0;letter-spacing:-0.3px">MAG</span></div>
</div>
<div class="ind" style="top:330px;height:19px;line-height:19px"><span class="abs" style="left:4px;top:0.5px">16</span></div>
<div class="row" style="top:330px">
<div class="cell" style="left:0px;width:127px;background:#eaf2fd"><span class="abs" style="right:5px;top:0;letter-spacing:-0.31px">Fara legaturi</span></div>
<div class="cell" style="left:127px;width:100px;background:#eaf2fd"><span class="abs" style="left:4px;top:0">23</span></div>
<div class="cell" style="left:227px;width:100px;background:#eaf2fd"><span class="abs" style="left:4px;top:0;letter-spacing:-0.4px">Mouse</span></div>
<div class="cell" style="left:327px;width:100px;background:#eaf2fd"><span class="abs" style="left:4px;top:0;letter-spacing:-0.4px">Mouse</span></div>
<div class="cell" style="left:427px;width:100px;background:#eaf2fd"><span class="abs" style="left:4px;top:0">T</span></div>
<div class="cell" style="left:527px;width:100px;background:#eaf2fd"><span class="abs" style="left:4px;top:0;letter-spacing:-0.23px">Sediu</span></div>
<div class="cell" style="left:627px;width:100px;background:#eaf2fd"><span class="abs" style="left:4px;top:0"></span></div>
<div class="cell" style="left:727px;width:88px;background:#eaf2fd;border-right:none"><span class="abs" style="left:4px;top:0;letter-spacing:-0.24px">DEP</span></div>
</div>
<div class="ind" style="top:349px;height:19px;line-height:19px"><span class="abs" style="left:4px;top:0.5px">17</span></div>
<div class="row" style="top:349px">
<div class="cell" style="left:0px;width:127px;background:#fff"><span class="abs" style="right:5px;top:0;letter-spacing:-0.31px">Fara legaturi</span></div>
<div class="cell" style="left:127px;width:100px;background:#fff"><span class="abs" style="left:4px;top:0">24</span></div>
<div class="cell" style="left:227px;width:100px;background:#fff"><span class="abs" style="left:4px;top:0;letter-spacing:-0.31px">Baterii</span></div>
<div class="cell" style="left:327px;width:100px;background:#fff"><span class="abs" style="left:4px;top:0;letter-spacing:-0.31px">Baterii</span></div>
<div class="cell" style="left:427px;width:100px;background:#fff"><span class="abs" style="left:4px;top:0">T</span></div>
<div class="cell" style="left:527px;width:100px;background:#fff"><span class="abs" style="left:4px;top:0;letter-spacing:-0.23px">Sediu</span></div>
<div class="cell" style="left:627px;width:100px;background:#fff"><span class="abs" style="left:4px;top:0"></span></div>
<div class="cell" style="left:727px;width:88px;background:#fff;border-right:none"><span class="abs" style="left:4px;top:0;letter-spacing:-0.3px">MAG</span></div>
</div>
<div class="ind" style="top:368px;height:19px;line-height:19px"><span class="abs" style="left:4px;top:0.5px">18</span></div>
<div class="row" style="top:368px">
<div class="cell" style="left:0px;width:127px;background:#eaf2fd"><span class="abs" style="right:5px;top:0;letter-spacing:-0.31px">Fara legaturi</span></div>
<div class="cell" style="left:127px;width:100px;background:#eaf2fd"><span class="abs" style="left:4px;top:0">25</span></div>
<div class="cell" style="left:227px;width:100px;background:#eaf2fd"><span class="abs" style="left:4px;top:0;letter-spacing:-0.12px">Laptop Lenovo</span></div>
<div class="cell" style="left:327px;width:100px;background:#eaf2fd"><span class="abs" style="left:4px;top:0;letter-spacing:-0.12px">Laptop Lenovo</span></div>
<div class="cell" style="left:427px;width:100px;background:#eaf2fd"><span class="abs" style="left:4px;top:0">T</span></div>
<div class="cell" style="left:527px;width:100px;background:#eaf2fd"><span class="abs" style="left:4px;top:0;letter-spacing:-0.23px">Sediu</span></div>
<div class="cell" style="left:627px;width:100px;background:#eaf2fd"><span class="abs" style="left:4px;top:0"></span></div>
<div class="cell" style="left:727px;width:88px;background:#eaf2fd;border-right:none"><span class="abs" style="left:4px;top:0;letter-spacing:-0.24px">DEP</span></div>
</div>
<div class="ind" style="top:387px;height:19px;line-height:19px"><span class="abs" style="left:4px;top:0.5px">19</span></div>
<div class="row" style="top:387px">
<div class="cell" style="left:0px;width:127px;background:#fff"><svg class="ic" width="17" height="18" viewBox="0 0 17 18"><rect width="17" height="18" fill="#fff"/>
<path d="M7.7 11.8 L9.6 15.9" stroke="#161616" stroke-width="2.6" fill="none"/><path d="M8.5 11.5 L10.4 15.5" stroke="#a2a2a2" stroke-width="1.6" fill="none"/>
<path d="M12.5 10.2 L15.8 12.3" stroke="#161616" stroke-width="2.4" fill="none"/><path d="M12.9 9.5 L16.3 11.6" stroke="#a2a2a2" stroke-width="1.6" fill="none"/>
<path d="M6.8 10.8 L2.9 6.9 C1.3 4.9 2.9 2.8 5.9 2.6 C8.5 2.5 10 3.8 10.6 5.6 L11.9 9.2" stroke="#d98a45" stroke-width="3.1" fill="none"/>
<path d="M6.9 10.6 L3.1 6.8 C1.6 4.9 3.1 3 5.9 2.8 C8.4 2.7 9.9 3.9 10.5 5.6 L11.8 9" stroke="#f0a25c" stroke-width="2.4" fill="none"/>
<path d="M6.6 9.4 L3.6 6.3 C2.6 4.9 3.5 3.3 5.9 3.1 C8.1 3 9.5 4.1 10.1 5.6 L10.9 8" stroke="#fbcfa2" stroke-width="1" fill="none"/>
<path d="M1.5 7.6 L5.2 11.6" stroke="#1a0d02" stroke-width="0.9" stroke-dasharray="1.2 0.5" fill="none"/>
<path d="M4.3 4.7 C6 4 8 4.9 8.9 6.8" stroke="#1a0d02" stroke-width="0.9" stroke-dasharray="1.4 0.4" fill="none"/></svg><span class="abs" style="right:5px;top:0;letter-spacing:-0.31px">Are parinte</span></div>
<div class="cell" style="left:127px;width:100px;background:#fff"><span class="abs" style="left:4px;top:0">3</span></div>
<div class="cell" style="left:227px;width:100px;background:#fff"><span class="abs" style="left:4px;top:0;letter-spacing:-0.12px">Laptop Lenovo</span></div>
<div class="cell" style="left:327px;width:100px;background:#fff"><span class="abs" style="left:4px;top:0;letter-spacing:-0.12px">Laptop Lenovo</span></div>
<div class="cell" style="left:427px;width:100px;background:#fff"><span class="abs" style="left:4px;top:0">T</span></div>
<div class="cell" style="left:527px;width:100px;background:#fff"><span class="abs" style="left:4px;top:0;letter-spacing:-0.23px">Sediu</span></div>
<div class="cell" style="left:627px;width:100px;background:#fff"><span class="abs" style="left:4px;top:0;letter-spacing:-0.12px">Laptop Lenovo</span></div>
<div class="cell" style="left:727px;width:88px;background:#fff;border-right:none"><span class="abs" style="left:4px;top:0;letter-spacing:-0.3px">MAG</span></div>
</div>
<div class="ind" style="top:406px;height:19px;line-height:19px"><span class="abs" style="left:4px;top:0.5px">20</span></div>
<div class="row" style="top:406px">
<div class="cell" style="left:0px;width:127px;background:#eaf2fd"><svg class="ic" width="17" height="18" viewBox="0 0 17 18"><rect width="17" height="18" fill="#fff"/>
<g fill="none" stroke="#2e1a06" stroke-width="2.3"><ellipse cx="4.6" cy="4.7" rx="3.3" ry="1.9" transform="rotate(40 4.6 4.7)"/><ellipse cx="8.9" cy="9" rx="3.4" ry="1.8" transform="rotate(47 8.9 9)"/><ellipse cx="13" cy="13.3" rx="3.1" ry="2.3" transform="rotate(52 13 13.3)"/></g>
<g fill="none" stroke="#f3a55e" stroke-width="1.7"><ellipse cx="4.9" cy="4.4" rx="3.3" ry="1.9" transform="rotate(40 4.9 4.4)"/><ellipse cx="9.2" cy="8.7" rx="3.4" ry="1.8" transform="rotate(47 9.2 8.7)"/><ellipse cx="13.3" cy="13" rx="3.1" ry="2.3" transform="rotate(52 13.3 13)"/></g>
<g fill="none" stroke="#fcd9b4" stroke-width="0.7"><ellipse cx="5" cy="4.2" rx="3.3" ry="1.9" transform="rotate(40 5 4.2)"/><ellipse cx="9.3" cy="8.5" rx="3.4" ry="1.8" transform="rotate(47 9.3 8.5)"/><ellipse cx="13.4" cy="12.8" rx="3.1" ry="2.3" transform="rotate(52 13.4 12.8)"/></g></svg><span class="abs" style="right:5px;top:0;letter-spacing:-0.17px">Legatura bidirectio...</span></div>
<div class="cell" style="left:127px;width:100px;background:#eaf2fd"><span class="abs" style="left:4px;top:0">4</span></div>
<div class="cell" style="left:227px;width:100px;background:#eaf2fd"><span class="abs" style="left:4px;top:0;letter-spacing:-0.4px">Mouse</span></div>
<div class="cell" style="left:327px;width:100px;background:#eaf2fd"><span class="abs" style="left:4px;top:0;letter-spacing:-0.4px">Mouse</span></div>
<div class="cell" style="left:427px;width:100px;background:#eaf2fd"><span class="abs" style="left:4px;top:0">F</span></div>
<div class="cell" style="left:527px;width:100px;background:#eaf2fd"><span class="abs" style="left:4px;top:0;letter-spacing:-0.23px">Sediu</span></div>
<div class="cell" style="left:627px;width:100px;background:#eaf2fd"><span class="abs" style="left:4px;top:0;letter-spacing:-0.12px">Laptop Lenovo</span></div>
<div class="cell" style="left:727px;width:88px;background:#eaf2fd;border-right:none"><span class="abs" style="left:4px;top:0;letter-spacing:-0.3px">MAG</span></div>
</div>
<div class="ind" style="top:425px;height:19px;line-height:19px"><span class="abs" style="left:4px;top:0.5px">21</span></div>
<div class="row" style="top:425px">
<div class="cell" style="left:0px;width:127px;background:#fff"><span class="abs" style="right:5px;top:0;letter-spacing:-0.31px">Fara legaturi</span></div>
<div class="cell" style="left:127px;width:100px;background:#fff"><span class="abs" style="left:4px;top:0">5</span></div>
<div class="cell" style="left:227px;width:100px;background:#fff"><span class="abs" style="left:4px;top:0;letter-spacing:-0.4px">Mouse</span></div>
<div class="cell" style="left:327px;width:100px;background:#fff"><span class="abs" style="left:4px;top:0;letter-spacing:-0.4px">Mouse</span></div>
<div class="cell" style="left:427px;width:100px;background:#fff"><span class="abs" style="left:4px;top:0">T</span></div>
<div class="cell" style="left:527px;width:100px;background:#fff"><span class="abs" style="left:4px;top:0;letter-spacing:-0.23px">Sediu</span></div>
<div class="cell" style="left:627px;width:100px;background:#fff"><span class="abs" style="left:4px;top:0"></span></div>
<div class="cell" style="left:727px;width:88px;background:#fff;border-right:none"><span class="abs" style="left:4px;top:0;letter-spacing:-0.3px">MAG</span></div>
</div>
<div class="ind" style="top:444px;height:19px;line-height:19px"><span class="abs" style="left:4px;top:0.5px">22</span></div>
<div class="row" style="top:444px">
<div class="cell" style="left:0px;width:127px;background:#eaf2fd"><svg class="ic" width="17" height="18" viewBox="0 0 17 18"><rect width="17" height="18" fill="#fff"/>
<path d="M7.7 11.8 L9.6 15.9" stroke="#161616" stroke-width="2.6" fill="none"/><path d="M8.5 11.5 L10.4 15.5" stroke="#a2a2a2" stroke-width="1.6" fill="none"/>
<path d="M12.5 10.2 L15.8 12.3" stroke="#161616" stroke-width="2.4" fill="none"/><path d="M12.9 9.5 L16.3 11.6" stroke="#a2a2a2" stroke-width="1.6" fill="none"/>
<path d="M6.8 10.8 L2.9 6.9 C1.3 4.9 2.9 2.8 5.9 2.6 C8.5 2.5 10 3.8 10.6 5.6 L11.9 9.2" stroke="#d98a45" stroke-width="3.1" fill="none"/>
<path d="M6.9 10.6 L3.1 6.8 C1.6 4.9 3.1 3 5.9 2.8 C8.4 2.7 9.9 3.9 10.5 5.6 L11.8 9" stroke="#f0a25c" stroke-width="2.4" fill="none"/>
<path d="M6.6 9.4 L3.6 6.3 C2.6 4.9 3.5 3.3 5.9 3.1 C8.1 3 9.5 4.1 10.1 5.6 L10.9 8" stroke="#fbcfa2" stroke-width="1" fill="none"/>
<path d="M1.5 7.6 L5.2 11.6" stroke="#1a0d02" stroke-width="0.9" stroke-dasharray="1.2 0.5" fill="none"/>
<path d="M4.3 4.7 C6 4 8 4.9 8.9 6.8" stroke="#1a0d02" stroke-width="0.9" stroke-dasharray="1.4 0.4" fill="none"/></svg><span class="abs" style="right:5px;top:0;letter-spacing:-0.31px">Are parinte</span></div>
<div class="cell" style="left:127px;width:100px;background:#eaf2fd"><span class="abs" style="left:4px;top:0">6</span></div>
<div class="cell" style="left:227px;width:100px;background:#eaf2fd"><span class="abs" style="left:4px;top:0;letter-spacing:-0.31px">Baterii</span></div>
<div class="cell" style="left:327px;width:100px;background:#eaf2fd"><span class="abs" style="left:4px;top:0;letter-spacing:-0.31px">Baterii</span></div>
<div class="cell" style="left:427px;width:100px;background:#eaf2fd"><span class="abs" style="left:4px;top:0">T</span></div>
<div class="cell" style="left:527px;width:100px;background:#eaf2fd"><span class="abs" style="left:4px;top:0;letter-spacing:-0.23px">Sediu</span></div>
<div class="cell" style="left:627px;width:100px;background:#eaf2fd"><span class="abs" style="left:4px;top:0;letter-spacing:-0.4px">Mouse</span></div>
<div class="cell" style="left:727px;width:88px;background:#eaf2fd;border-right:none"><span class="abs" style="left:4px;top:0;letter-spacing:-0.3px">MAG</span></div>
</div>
<div class="ind" style="top:463px;height:19px;line-height:19px"><span class="abs" style="left:4px;top:0.5px">23</span></div>
<div class="row" style="top:463px">
<div class="cell" style="left:0px;width:127px;background:#fff"><svg class="ic" width="17" height="18" viewBox="0 0 17 18"><rect width="17" height="18" fill="#fff"/>
<path d="M7.7 11.8 L9.6 15.9" stroke="#161616" stroke-width="2.6" fill="none"/><path d="M8.5 11.5 L10.4 15.5" stroke="#a2a2a2" stroke-width="1.6" fill="none"/>
<path d="M12.5 10.2 L15.8 12.3" stroke="#161616" stroke-width="2.4" fill="none"/><path d="M12.9 9.5 L16.3 11.6" stroke="#a2a2a2" stroke-width="1.6" fill="none"/>
<path d="M6.8 10.8 L2.9 6.9 C1.3 4.9 2.9 2.8 5.9 2.6 C8.5 2.5 10 3.8 10.6 5.6 L11.9 9.2" stroke="#d98a45" stroke-width="3.1" fill="none"/>
<path d="M6.9 10.6 L3.1 6.8 C1.6 4.9 3.1 3 5.9 2.8 C8.4 2.7 9.9 3.9 10.5 5.6 L11.8 9" stroke="#f0a25c" stroke-width="2.4" fill="none"/>
<path d="M6.6 9.4 L3.6 6.3 C2.6 4.9 3.5 3.3 5.9 3.1 C8.1 3 9.5 4.1 10.1 5.6 L10.9 8" stroke="#fbcfa2" stroke-width="1" fill="none"/>
<path d="M1.5 7.6 L5.2 11.6" stroke="#1a0d02" stroke-width="0.9" stroke-dasharray="1.2 0.5" fill="none"/>
<path d="M4.3 4.7 C6 4 8 4.9 8.9 6.8" stroke="#1a0d02" stroke-width="0.9" stroke-dasharray="1.4 0.4" fill="none"/></svg><span class="abs" style="right:5px;top:0;letter-spacing:-0.31px">Are parinte</span></div>
<div class="cell" style="left:127px;width:100px;background:#fff"><span class="abs" style="left:4px;top:0">7</span></div>
<div class="cell" style="left:227px;width:100px;background:#fff"><span class="abs" style="left:4px;top:0;letter-spacing:-0.31px">Baterii</span></div>
<div class="cell" style="left:327px;width:100px;background:#fff"><span class="abs" style="left:4px;top:0;letter-spacing:-0.31px">Baterii</span></div>
<div class="cell" style="left:427px;width:100px;background:#fff"><span class="abs" style="left:4px;top:0">T</span></div>
<div class="cell" style="left:527px;width:100px;background:#fff"><span class="abs" style="left:4px;top:0;letter-spacing:-0.23px">Sediu</span></div>
<div class="cell" style="left:627px;width:100px;background:#fff"><span class="abs" style="left:4px;top:0;letter-spacing:-0.4px">Mouse</span></div>
<div class="cell" style="left:727px;width:88px;background:#fff;border-right:none"><span class="abs" style="left:4px;top:0;letter-spacing:-0.3px">MAG</span></div>
</div>
<div class="abs" style="left:865px;top:0;width:16px;height:479px;background:linear-gradient(90deg,#efefef,#fbfbfb);border-left:1px solid #fff">
<svg class="abs" style="left:3px;top:6px" width="10" height="5.4" viewBox="0 0 10 6"><path d="M0 6L5 0L10 6z" fill="#4d6185"/></svg>
<div class="abs" style="left:0px;top:17px;width:15px;height:391px;border:1px solid #6b7890;border-radius:2px;background:linear-gradient(90deg,#f4f6fa 0,#dde3ed 40%,#c2cbdb 60%,#d3dae6 100%)"></div>
<svg class="abs" style="left:4px;top:208px" width="8" height="8" viewBox="0 0 8 8"><path d="M0 0.5h8M0 2.5h8M0 4.5h8M0 6.5h8" stroke="#6d7a90" stroke-width="1"/></svg>
<svg class="abs" style="left:3px;top:468px" width="10" height="5.4" viewBox="0 0 10 6"><path d="M0 0L5 6L10 0z" fill="#4d6185"/></svg>
</div>
<div class="abs" style="left:0;top:479px;width:881px;height:17px;background:linear-gradient(#e4edf9 0,#dde8f6 50%,#d0def1 56%,#d9e5f4 100%);border-top:1px solid #9db7dc;color:#1c4587;font-size:11px;line-height:17px">
<span class="abs" style="left:4px;top:0;letter-spacing:-0.27px">Inregistrarea:</span>
<svg class="abs" style="left:80px;top:4px" width="9" height="8" viewBox="0 0 9 8"><path d="M0.5 0h2v8h-2z M9 0v8L3.5 4z" fill="#1c3f7c"/></svg>
<svg class="abs" style="left:102px;top:4px" width="5" height="8" viewBox="0 0 5 8"><path d="M5 0v8L0 4z" fill="#a9a9a9"/></svg>
<div class="abs" style="left:116px;top:1px;width:42px;height:15px;background:#fff;border:1px solid #7f9db9;text-align:right;padding-right:1px;line-height:14px;color:#000">1</div>
<span class="abs" style="left:161px;top:0">Din</span><span class="abs" style="left:188px;top:0">25</span>
<svg class="abs" style="left:215px;top:4px" width="5" height="8" viewBox="0 0 5 8"><path d="M0 0v8L5 4z" fill="#1c3f7c"/></svg>
<svg class="abs" style="left:232px;top:4px" width="9" height="8" viewBox="0 0 9 8"><path d="M6.5 0h2v8h-2z M0 0v8L5.5 4z" fill="#1c3f7c"/></svg>
<div class="abs" style="left:249px;top:0;width:1px;height:16px;background:#7f9fcd"></div>
<div class="abs" style="left:250px;top:0;width:615px;height:16px;background:linear-gradient(#eeeeee,#fbfbfb)"></div>
<svg class="abs" style="left:255px;top:3px" width="6" height="9" viewBox="0 0 6 9"><path d="M6 0v9L0 4.5z" fill="#4d6185"/></svg>
<div class="abs" style="left:266px;top:1px;width:123px;height:14px;border:1px solid #6b7890;border-radius:2px;background:linear-gradient(#f6f8fb 0,#e1e6ef 40%,#c5cedd 60%,#d5dce8 100%)"></div>
<svg class="abs" style="left:324px;top:5px" width="8" height="7" viewBox="0 0 8 7"><path d="M0.5 0v7M2.5 0v7M4.5 0v7M6.5 0v7" stroke="#6d7a90" stroke-width="1"/></svg>
<svg class="abs" style="left:853px;top:3px" width="6" height="9" viewBox="0 0 6 9"><path d="M0 0v9L6 4.5z" fill="#4d6185"/></svg>
</div>
</div>
<div class="abs" style="left:7px;top:581px;width:884px;height:38px;background:#fff"></div>
<div class="abs" style="left:7px;top:585px;width:884px;height:1px;background:#a0a0a0"></div>
<div class="abs" style="left:10px;top:590px;width:75px;height:23px;border:1px solid #9fb2cf;border-radius:4px;background:linear-gradient(#e6eef9 0,#dce7f5 48%,#cfdcef 52%,#d3dff1 100%);color:#1c3564;font-size:11px;line-height:21px;text-align:center"><u>A</u>jutor</div>
<div class="abs" style="left:811px;top:590px;width:75px;height:23px;border:1px solid #9fb2cf;border-radius:4px;background:linear-gradient(#e6eef9 0,#dce7f5 48%,#cfdcef 52%,#d3dff1 100%);color:#1c3564;font-size:11px;line-height:21px;text-align:center">In<u>c</u>hide</div>
<div class="abs" style="left:7px;top:618px;width:884px;height:2px;background:linear-gradient(#b9c6d9,#a7b5cb)"></div>
<div class="abs" style="left:7px;top:620px;width:884px;height:23px;background:linear-gradient(#eeeeee,#f7f7f7 50%,#fdfdfd 95%,#ffffff)"></div>
<div class="abs" style="left:6px;top:643px;width:886px;height:1px;background:#b0bbcb"></div>
<div class="abs" style="left:891px;top:581px;width:1px;height:63px;background:#b0bbcb"></div>
<div class="abs" style="left:6px;top:581px;width:1px;height:63px;background:#bcc7d7"></div>
<div class="abs" style="left:34px;top:624.5px;font-size:12px;font-weight:bold;color:#1e3768;line-height:14px;letter-spacing:-0.15px">Vizualizare:</div>
<div class="abs" style="left:108px;top:624.5px;font-size:12px;color:#1e3d7b;line-height:14px;letter-spacing:0.13px">Actiune Articole</div>

</div></body></html>
